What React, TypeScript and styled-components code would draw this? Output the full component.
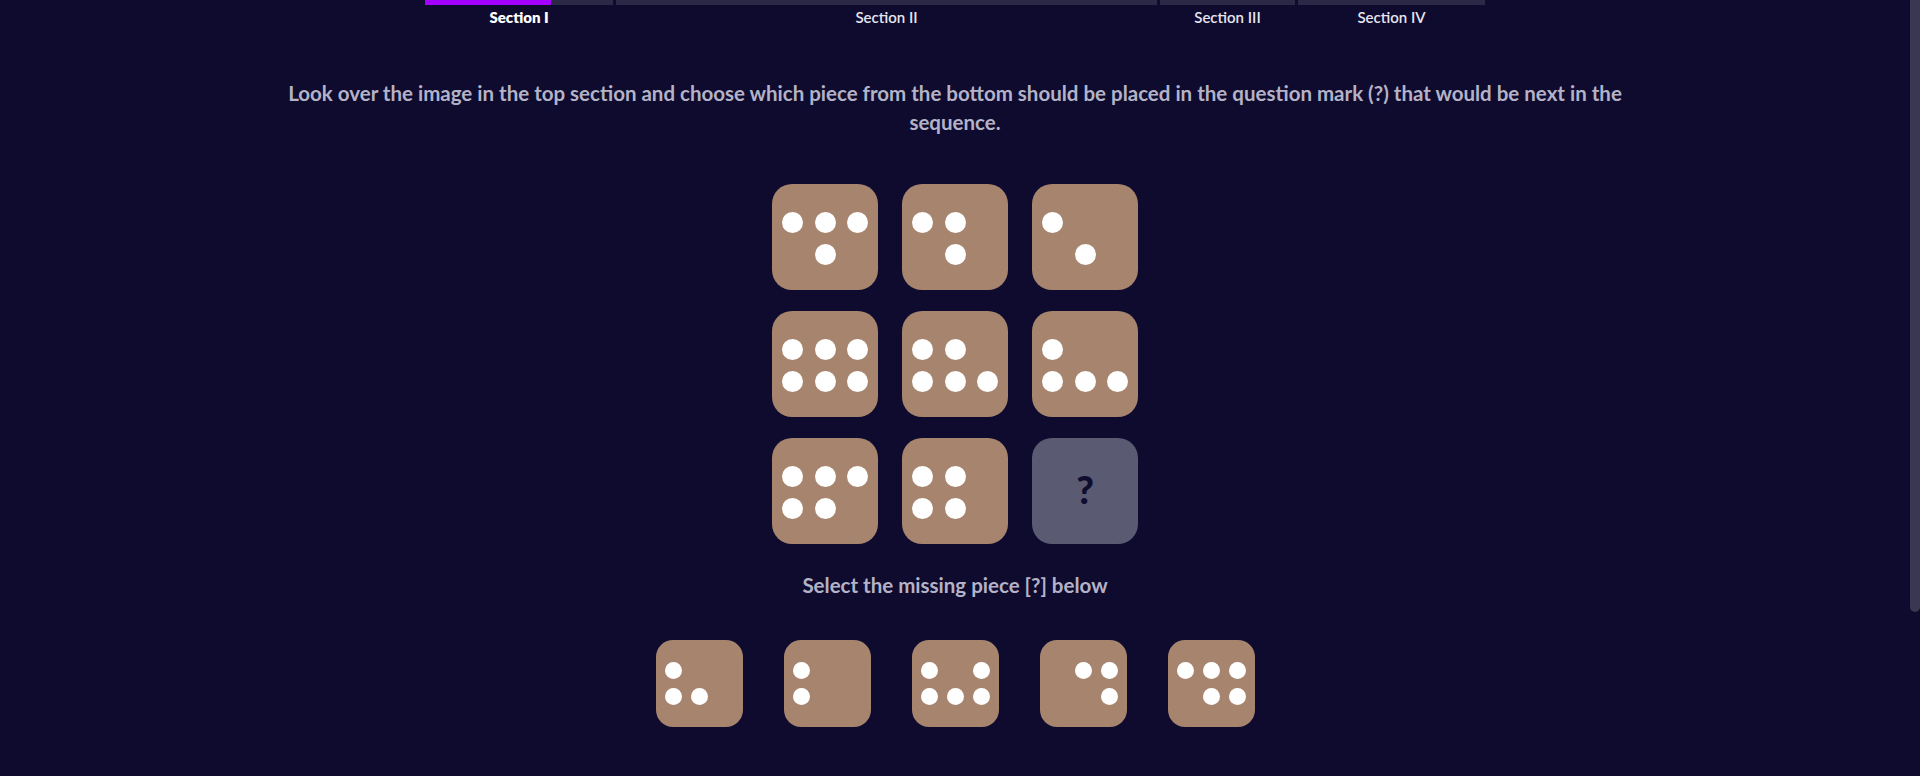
import styled, { createGlobalStyle } from 'styled-components';

const GlobalStyle = createGlobalStyle`
  html, body {
    margin: 0;
    padding: 0;
    background: #0e0b2e;
  }
  body {
    font-family: Lato, "Open Sans", "Liberation Sans", sans-serif;
    color: #ffffff;
  }
  ::-webkit-scrollbar {
    width: 10px;
  }
  ::-webkit-scrollbar-track {
    background: #0e0b2e;
  }
  ::-webkit-scrollbar-thumb {
    background: #3a3753;
    border-radius: 5px;
  }
`;

const Page = styled.main`
  min-height: 984px;
  display: flex;
  flex-direction: column;
  align-items: center;
  box-sizing: border-box;
  padding: 0 10px 257px 0;
`;

// stands in for the page scrollbar, which the capture browser hides
const ScrollThumb = styled.div`
  position: fixed;
  top: 0;
  right: 0;
  width: 10px;
  height: 612px;
  border-radius: 0 0 5px 5px;
  background: #3a3753;
`;

const Sections = styled.nav`
  display: flex;
  gap: 3px;
`;

const Section = styled.div<{ $w: number }>`
  width: ${(p) => p.$w}px;
  display: flex;
  flex-direction: column;
  align-items: center;
`;

const Bar = styled.div`
  width: 100%;
  height: 5px;
  background: #2a2844;
  overflow: hidden;
`;

const Fill = styled.div`
  height: 100%;
  background: #a400ff;
`;

const SectionLabel = styled.span<{ $active?: boolean }>`
  margin-top: 3px;
  font-size: 15px;
  line-height: 18px;
  font-weight: ${(p) => (p.$active ? 800 : 600)};
  color: ${(p) => (p.$active ? '#ffffff' : '#e6e5ef')};
`;

const Instruction = styled.p`
  margin: 53px 0 0;
  max-width: 1345px;
  text-align: center;
  font-size: 20.5px;
  line-height: 29px;
  font-weight: 700;
  color: #b4b2c7;
`;

const Board = styled.div`
  margin-top: 47px;
  display: grid;
  grid-template-columns: repeat(3, 106px);
  column-gap: 24px;
  row-gap: 21px;
`;

const Die = styled.div<{ $small?: boolean; $blank?: boolean }>`
  width: ${(p) => (p.$small ? 87 : 106)}px;
  height: ${(p) => (p.$small ? 87 : 106)}px;
  border-radius: ${(p) => (p.$small ? 17 : 20)}px;
  background: ${(p) => (p.$blank ? '#5a5a72' : '#a6846d')};
  box-sizing: border-box;
  padding-top: ${(p) => (p.$small ? 0 : 2)}px;
  display: grid;
  grid-template-columns: repeat(3, ${(p) => (p.$small ? 17 : 21)}px);
  grid-template-rows: repeat(2, ${(p) => (p.$small ? 17 : 21)}px);
  column-gap: ${(p) => (p.$small ? 9 : 11.5)}px;
  row-gap: ${(p) => (p.$small ? 9 : 11)}px;
  justify-content: center;
  align-content: center;
  cursor: ${(p) => (p.$small ? 'pointer' : 'default')};
`;

const Pip = styled.span<{ $r: number; $c: number }>`
  grid-row: ${(p) => p.$r};
  grid-column: ${(p) => p.$c};
  border-radius: 50%;
  background: #ffffff;
`;

const Mark = styled.span`
  grid-row: 1 / 3;
  grid-column: 1 / 4;
  align-self: center;
  justify-self: center;
  margin-bottom: 6px;
  font-size: 38px;
  line-height: 1;
  font-weight: 900;
  color: #0f0c2e;
`;

const Prompt = styled.h3`
  margin: 27px 0 0;
  font-size: 20.5px;
  line-height: 29px;
  font-weight: 700;
  color: #b4b2c7;
`;

const Options = styled.div`
  margin-top: 40px;
  display: flex;
  gap: 41px;
`;

type Cell = [number, number];

const sections = [
  { label: 'Section I', w: 188, progress: 67, active: true },
  { label: 'Section II', w: 541, progress: 0 },
  { label: 'Section III', w: 135, progress: 0 },
  { label: 'Section IV', w: 187, progress: 0 },
];

const board: (Cell[] | null)[] = [
  [[1, 1], [1, 2], [1, 3], [2, 2]],
  [[1, 1], [1, 2], [2, 2]],
  [[1, 1], [2, 2]],
  [[1, 1], [1, 2], [1, 3], [2, 1], [2, 2], [2, 3]],
  [[1, 1], [1, 2], [2, 1], [2, 2], [2, 3]],
  [[1, 1], [2, 1], [2, 2], [2, 3]],
  [[1, 1], [1, 2], [1, 3], [2, 1], [2, 2]],
  [[1, 1], [1, 2], [2, 1], [2, 2]],
  null,
];

const options: Cell[][] = [
  [[1, 1], [2, 1], [2, 2]],
  [[1, 1], [2, 1]],
  [[1, 1], [1, 3], [2, 1], [2, 2], [2, 3]],
  [[1, 2], [1, 3], [2, 3]],
  [[1, 1], [1, 2], [1, 3], [2, 2], [2, 3]],
];

export default function App() {
  return (
    <Page>
      <GlobalStyle />
      <ScrollThumb />
      <Sections>
        {sections.map((s) => (
          <Section key={s.label} $w={s.w}>
            <Bar>
              <Fill style={{ width: `${s.progress}%` }} />
            </Bar>
            <SectionLabel $active={s.active}>{s.label}</SectionLabel>
          </Section>
        ))}
      </Sections>

      <Instruction>
        Look over the image in the top section and choose which piece from the bottom should be
        placed in the question mark (?) that would be next in the sequence.
      </Instruction>

      <Board>
        {board.map((pips, i) =>
          pips ? (
            <Die key={i}>
              {pips.map(([r, c]) => (
                <Pip key={`${r}-${c}`} $r={r} $c={c} />
              ))}
            </Die>
          ) : (
            <Die key={i} $blank>
              <Mark>?</Mark>
            </Die>
          )
        )}
      </Board>

      <Prompt>Select the missing piece [?] below</Prompt>

      <Options>
        {options.map((pips, i) => (
          <Die key={i} $small>
            {pips.map(([r, c]) => (
              <Pip key={`${r}-${c}`} $r={r} $c={c} />
            ))}
          </Die>
        ))}
      </Options>
    </Page>
  );
}
